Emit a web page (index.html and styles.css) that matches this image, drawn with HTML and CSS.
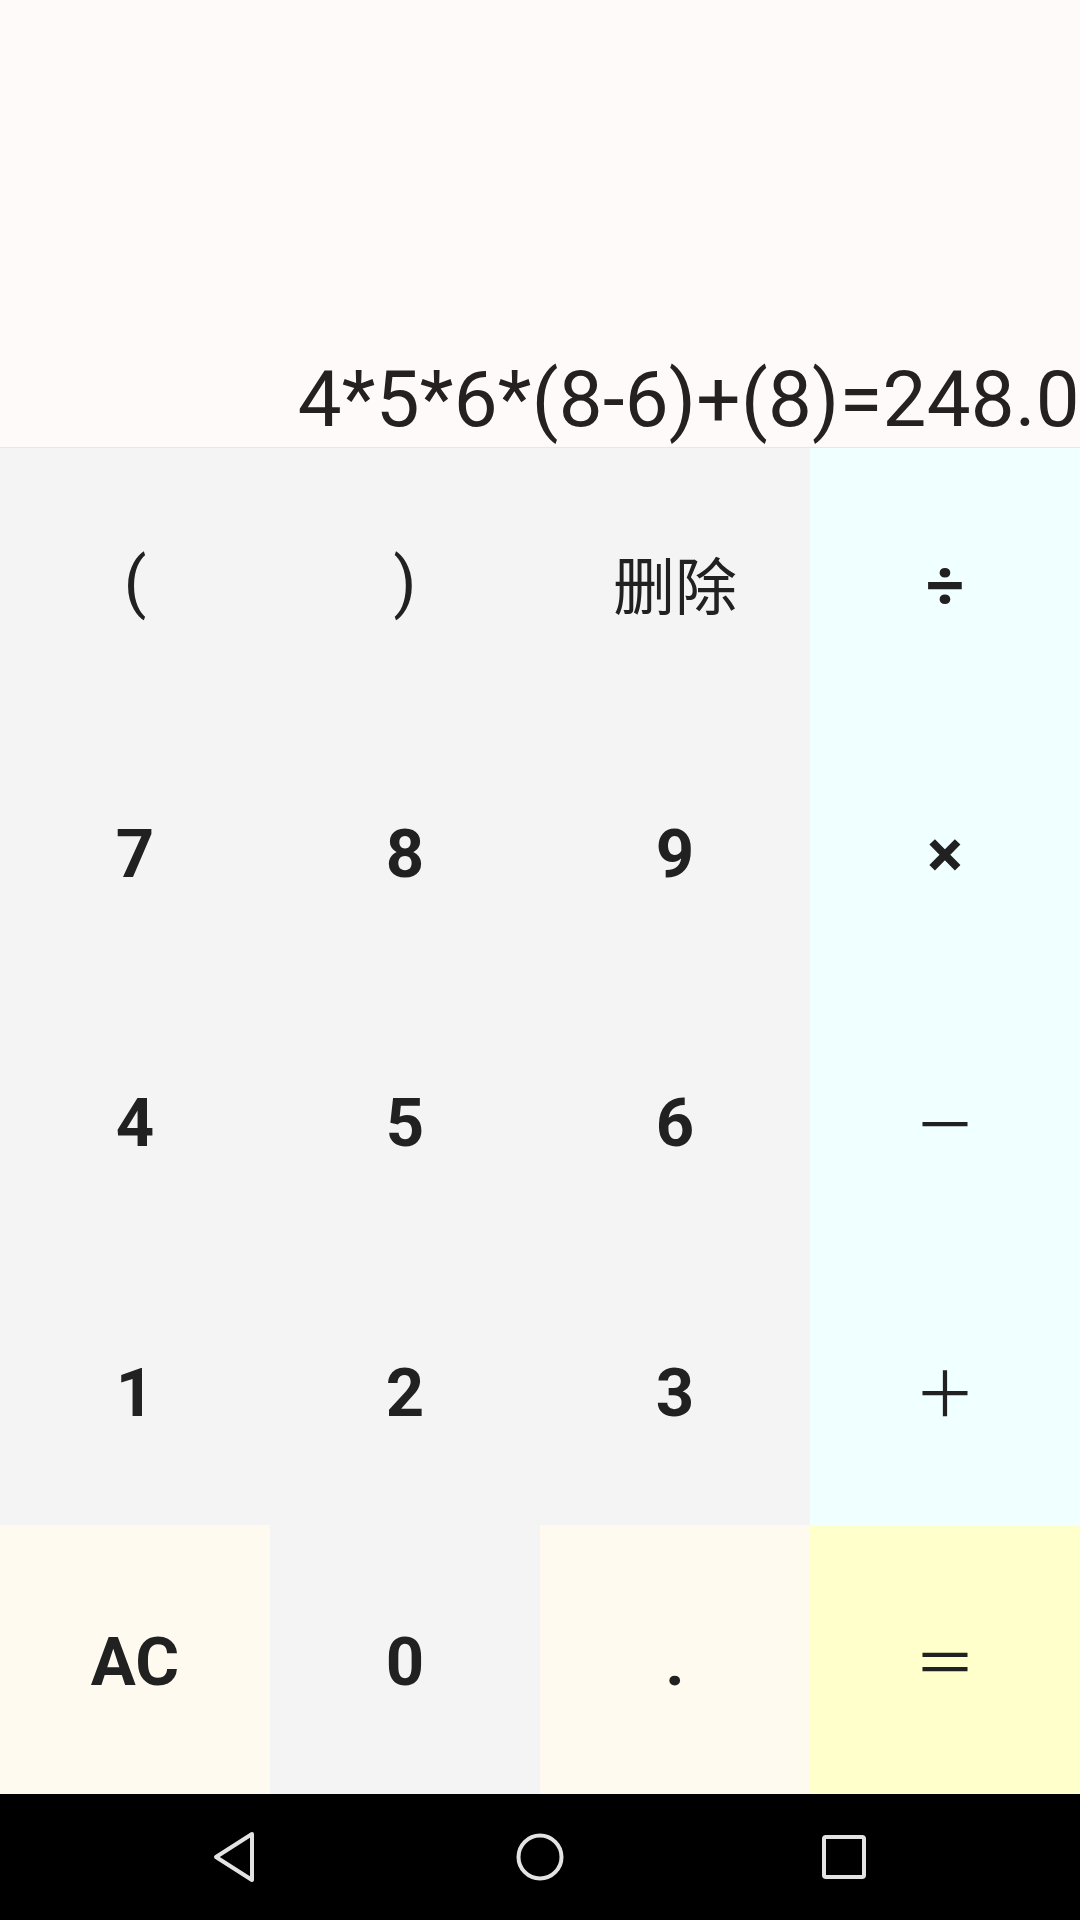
FILE: index.html
```html
<!DOCTYPE html>
<html lang="zh">
<head>
<meta charset="utf-8">
<title>计算器</title>
<link rel="stylesheet" href="styles.css">
</head>
<body>
<div class="app">
  <div class="display">
    <div class="expr">4*5*6*(8-6)+(8)=248.0</div>
  </div>
  <div class="keypad">
    <div class="key gray paren">(</div>
    <div class="key gray paren">)</div>
    <div class="key gray cjk">删除</div>
    <div class="key op">÷</div>

    <div class="key gray">7</div>
    <div class="key gray">8</div>
    <div class="key gray">9</div>
    <div class="key op">×</div>

    <div class="key gray">4</div>
    <div class="key gray">5</div>
    <div class="key gray">6</div>
    <div class="key op wide">－</div>

    <div class="key gray">1</div>
    <div class="key gray">2</div>
    <div class="key gray">3</div>
    <div class="key op wide">＋</div>

    <div class="key floral">AC</div>
    <div class="key gray">0</div>
    <div class="key floral">.</div>
    <div class="key eq wide">＝</div>
  </div>
  <div class="navbar">
    <svg class="nav-icon" viewBox="0 0 48 52" width="48" height="52">
      <path d="M40 3 L4 26 L40 49 Z" fill="none" stroke="#e3e3e3" stroke-width="4" stroke-linejoin="round"/>
    </svg>
    <svg class="nav-icon" viewBox="0 0 48 52" width="48" height="52">
      <circle cx="24" cy="26" r="21.5" fill="none" stroke="#e3e3e3" stroke-width="4"/>
    </svg>
    <svg class="nav-icon" viewBox="0 0 48 52" width="48" height="52">
      <rect x="4" y="6" width="40" height="40" rx="2" fill="none" stroke="#e3e3e3" stroke-width="4"/>
    </svg>
  </div>
</div>
</body>
</html>
```

FILE: styles.css
```css
html, body {
  margin: 0;
  padding: 0;
}

body {
  width: 1080px;
  height: 1920px;
  overflow: hidden;
  font-family: Roboto, "Noto Sans", "Noto Sans CJK SC", sans-serif;
  color: #212121;
}

.app {
  display: flex;
  flex-direction: column;
  width: 1080px;
  height: 1920px;
}

.display {
  height: 448px;
  box-sizing: border-box;
  background: #fffafa;
  border-bottom: 1px solid #e8e6e6;
  display: flex;
  align-items: flex-end;
  justify-content: flex-end;
  overflow: hidden;
  padding-bottom: 8px;
}

.expr {
  font-size: 78px;
  line-height: 78px;
  letter-spacing: 0.3px;
  white-space: nowrap;
  color: #242120;
}

.keypad {
  height: 1346px;
  display: grid;
  grid-template-columns: repeat(4, 1fr);
  grid-template-rows: repeat(5, 1fr);
}

.key {
  display: flex;
  align-items: center;
  justify-content: center;
  padding-top: 5px;
  font-size: 67px;
  font-weight: 700;
  color: #212121;
}

.gray { background: #f4f4f4; }
.op { background: #f0ffff; }
.floral { background: #fffaf0; }
.eq { background: #ffffcc; }

.paren {
  padding-top: 0;
  font-weight: 400;
  font-size: 66px;
}

.cjk {
  padding-top: 0;
  font-family: "Noto Sans CJK SC", sans-serif;
  font-weight: 400;
  font-size: 62px;
}

.wide {
  padding-top: 0;
  font-family: "Noto Sans CJK SC", sans-serif;
  font-weight: 400;
  font-size: 62px;
}

.navbar {
  height: 126px;
  background: #000;
  display: flex;
  align-items: center;
  justify-content: center;
  gap: 256px;
}

.nav-icon {
  display: block;
}
```
